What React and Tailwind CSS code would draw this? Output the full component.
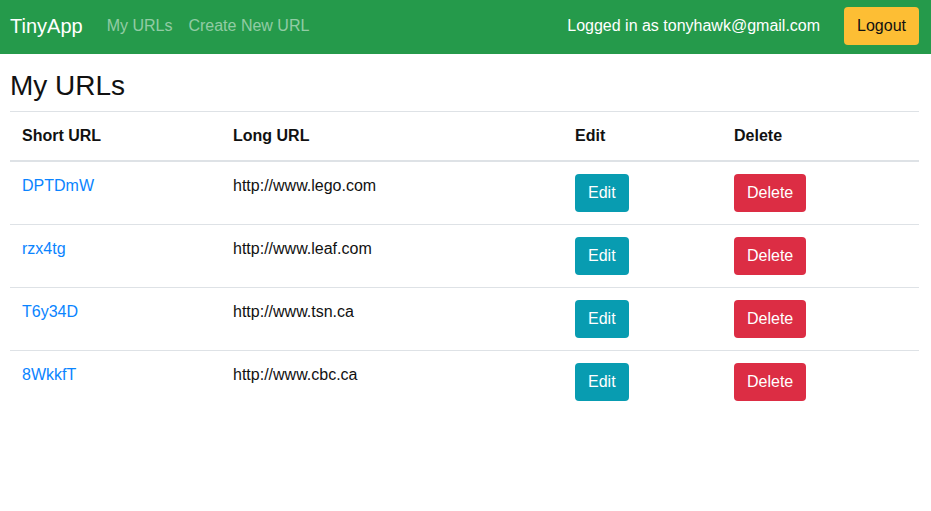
import React from 'react';

const urls = [
  { id: 'DPTDmW', long: 'http://www.lego.com' },
  { id: 'rzx4tg', long: 'http://www.leaf.com' },
  { id: 'T6y34D', long: 'http://www.tsn.ca' },
  { id: '8WkkfT', long: 'http://www.cbc.ca' },
];

const App = () => {
  return (
    <div className="min-h-screen bg-white text-[#111] text-base leading-6 font-['Liberation_Sans',Arial,sans-serif]">
      {/* Navbar */}
      <nav className="flex items-center justify-between h-[54px] pl-[10px] pr-[12px] pb-[2px] bg-[#259a4b]">
        <div className="flex items-center">
          <a href="#" className="text-white text-xl leading-[30px] mr-6">TinyApp</a>
          <a href="#" className="text-white/50 px-2 -ml-2">My URLs</a>
          <a href="#" className="text-white/50 px-2">Create New URL</a>
        </div>
        <div className="flex items-center gap-6">
          <span className="text-white">Logged in as tonyhawk@gmail.com</span>
          <button className="bg-[#fdbe34] text-[#111] px-[13px] py-[7px] rounded leading-6">Logout</button>
        </div>
      </nav>

      {/* Main */}
      <main className="px-[10px] pt-[15px]">
        <h3 className="text-[28px] leading-[1.2] font-normal mb-2">My URLs</h3>
        <table className="w-[909px] border-collapse text-left">
          <thead>
            <tr className="border-t border-[#dee2e6]">
              <th className="w-[211px] p-3 font-bold border-b-2 border-[#dee2e6]">Short URL</th>
              <th className="w-[342px] p-3 font-bold border-b-2 border-[#dee2e6]">Long URL</th>
              <th className="w-[159px] p-3 font-bold border-b-2 border-[#dee2e6]">Edit</th>
              <th className="p-3 font-bold border-b-2 border-[#dee2e6]">Delete</th>
            </tr>
          </thead>
          <tbody>
            {urls.map((u) => (
              <tr key={u.id} className="border-t border-[#dee2e6] first:border-t-0">
                <td className="p-3 align-top">
                  <a href="#" className="text-[#0a84ff]">{u.id}</a>
                </td>
                <td className="p-3 align-top">{u.long}</td>
                <td className="p-3 align-top">
                  <button className="bg-[#089cb1] text-white px-[13px] py-[7px] rounded leading-6">Edit</button>
                </td>
                <td className="p-3 align-top">
                  <button className="bg-[#dc2d44] text-white px-[13px] py-[7px] rounded leading-6">Delete</button>
                </td>
              </tr>
            ))}
          </tbody>
        </table>
      </main>
    </div>
  );
};

export default App;
